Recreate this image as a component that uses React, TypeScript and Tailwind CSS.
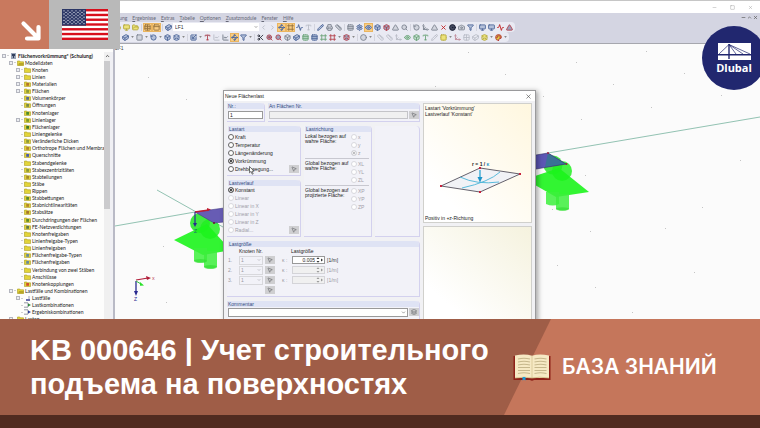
import clsx from "clsx";
import type { ReactNode } from "react";
import {
  Activity,
  Box,
  Camera,
  ChartLine,
  ChevronDown,
  ChevronLeft,
  ChevronRight,
  ChevronUp,
  Circle,
  CircleDot,
  Cuboid,
  Eye,
  Filter,
  FolderOpen,
  Frame,
  Grid2x2,
  Layers,
  Minus,
  MonitorUp,
  Move3d,
  MousePointer2,
  Palette,
  PanelTop,
  Pencil,
  Printer,
  RotateCcw,
  Ruler,
  Scaling,
  Scissors,
  Search,
  Settings,
  Square,
  Table,
  Triangle,
  Type,
  Waypoints,
  X,
  ZoomIn,
  type LucideIcon,
} from "lucide-react";

type Tool = {
  icon?: LucideIcon;
  color?: string;
  active?: boolean;
  kind?: "caret" | "sep" | "select";
};

const NAVY = "text-[#4d6698] fill-[#b4c0da]";
const SLATE = "text-[#7c828f] fill-[#d2d5de]";
const FADED = "text-[#b8bbc6]";
const RED = "text-[#b3404c] fill-[#9aa2bc]";
const GREEN = "text-[#6aa278] fill-[#c4dcd0]";
const YELLOW = "text-[#b4a838] fill-[#ece27a]";
const BROWN = "text-[#94703c]";

const t = (icon: LucideIcon, color: string, active = false): Tool => ({
  icon,
  color,
  active,
});
const caret: Tool = { kind: "caret" };
const sep: Tool = { kind: "sep" };

const toolbarTop: Tool[] = [
  t(FolderOpen, YELLOW),
  t(MonitorUp, YELLOW),
  t(FolderOpen, YELLOW),
  sep,
  t(Table, BROWN, true),
  t(PanelTop, BROWN, true),
  sep,
  t(Cuboid, NAVY),
  { kind: "select" },
  t(ChevronLeft, FADED),
  t(ChevronRight, FADED),
  t(Waypoints, NAVY, true),
  t(Frame, BROWN, true),
  t(Activity, NAVY),
  t(Type, FADED),
  sep,
  t(Pencil, NAVY),
  t(Printer, SLATE),
  t(Ruler, SLATE),
  sep,
  t(Table, SLATE),
  t(Settings, NAVY),
  t(Eye, NAVY, true),
  t(Box, NAVY),
  t(Box, RED),
  t(Triangle, SLATE),
  t(Search, SLATE),
  sep,
  t(RotateCcw, SLATE),
  t(Move3d, SLATE),
  t(Triangle, SLATE),
  t(X, "text-[#c02020]"),
  t(CircleDot, "text-[#181c30] fill-[#444a60]"),
  t(Camera, SLATE),
  t(Filter, NAVY),
  sep,
  t(MonitorUp, NAVY),
  t(MonitorUp, NAVY),
  t(Activity, "text-[#c02020]"),
  t(Triangle, RED),
];

const toolbarBottom: Tool[] = [
  t(Cuboid, NAVY),
  caret,
  t(Square, SLATE),
  caret,
  t(RotateCcw, NAVY),
  caret,
  t(Box, NAVY),
  t(Layers, NAVY),
  caret,
  sep,
  t(Scaling, NAVY),
  caret,
  t(Type, RED),
  t(ChartLine, FADED),
  t(ChartLine, SLATE),
  t(Waypoints, NAVY, true),
  t(Filter, NAVY),
  caret,
  sep,
  t(Scissors, "text-[#30343f]"),
  t(ZoomIn, RED),
  t(Search, RED),
  t(Box, SLATE),
  t(Cuboid, NAVY),
  t(Table, GREEN),
  t(Table, NAVY),
  t(Frame, GREEN),
  t(Frame, RED),
  caret,
  t(Layers, RED),
  caret,
  sep,
  t(Circle, SLATE),
  caret,
  sep,
  t(Ruler, FADED),
  t(Ruler, FADED),
  t(Move3d, FADED),
  t(Eye, GREEN),
  t(Box, GREEN),
  t(Type, GREEN),
  t(Pencil, FADED),
  t(Grid2x2, YELLOW),
  caret,
  t(Move3d, "text-[#c08a98]"),
  t(Grid2x2, FADED),
  t(Cuboid, FADED),
  t(Layers, YELLOW),
  caret,
  t(Palette, "text-[#b3303c] fill-[#e0d040]"),
  caret,
];

const menus = [
  "Berechnung",
  "Ergebnisse",
  "Extras",
  "Tabelle",
  "Optionen",
  "Zusatzmodule",
  "Fenster",
  "Hilfe",
];

type TreeRow = { label: string; level: number; box?: boolean; tint?: string };

const tree: TreeRow[] = [
  { label: "Flächenvorkrümmung* (Schulung)", level: 0, box: true },
  { label: "Modelldaten", level: 1, box: true },
  { label: "Knoten", level: 2, box: true },
  { label: "Linien", level: 2, box: true },
  { label: "Materialien", level: 2, box: true, tint: "#b5762c" },
  { label: "Flächen", level: 2, box: true, tint: "#8c9a3a" },
  { label: "Volumenkörper", level: 2, tint: "#5a6a90" },
  { label: "Öffnungen", level: 2, tint: "#7c8a4a" },
  { label: "Knotenlager", level: 2, tint: "#4f8a2c" },
  { label: "Linienlager", level: 2, box: true, tint: "#7c9a2c" },
  { label: "Flächenlager", level: 2, tint: "#3f7a2c" },
  { label: "Liniengelenke", level: 2 },
  { label: "Veränderliche Dicken", level: 2, tint: "#8c9a3a" },
  { label: "Orthotrope Flächen und Membran", level: 2, tint: "#b5862c" },
  { label: "Querschnitte", level: 2, tint: "#4a5ab0" },
  { label: "Stabendgelenke", level: 2 },
  { label: "Stabexzentrizitäten", level: 2, tint: "#8c9a3a" },
  { label: "Stabteilungen", level: 2, tint: "#a58a2c" },
  { label: "Stäbe", level: 2 },
  { label: "Rippen", level: 2 },
  { label: "Stabbettungen", level: 2, tint: "#5f8a2c" },
  { label: "Stabnichtlinearitäten", level: 2, tint: "#b5862c" },
  { label: "Stabsätze", level: 2, tint: "#a5762c" },
  { label: "Durchdringungen der Flächen", level: 2, tint: "#5f8a2c" },
  { label: "FE-Netzverdichtungen", level: 2, tint: "#5f7a4c" },
  { label: "Knotenfreigaben", level: 2 },
  { label: "Linienfreigabe-Typen", level: 2 },
  { label: "Linienfreigaben", level: 2 },
  { label: "Flächenfreigabe-Typen", level: 2, tint: "#6a8a9a" },
  { label: "Flächenfreigaben", level: 2, tint: "#6a8a9a" },
  { label: "Verbindung von zwei Stäben", level: 2 },
  { label: "Anschlüsse", level: 2 },
  { label: "Knotenkopplungen", level: 2, tint: "#d0502c" },
  { label: "Lastfälle und Kombinationen", level: 1, box: true },
  { label: "Lastfälle", level: 2, box: true, tint: "load" },
  { label: "Lastkombinationen", level: 2, tint: "combo" },
  { label: "Ergebniskombinationen", level: 2, tint: "combo" },
  { label: "Lasten", level: 1, box: true },
];

const indents = ["pl-[2px]", "pl-[9px]", "pl-[16px]"];

function TreeIcon({ row }: { row: TreeRow }) {
  if (row.level === 0) {
    return (
      <svg viewBox="0 0 7 6" className="h-[6px] w-[7px] shrink-0">
        <rect x="1" y="0" width="5" height="6" fill="#9aa4b8" />
        <path d="M2 1h3v2H2zM3 3h1v2H3z" fill="#33415e" />
      </svg>
    );
  }
  if (row.tint === "load") {
    return (
      <svg viewBox="0 0 7 6" className="h-[6px] w-[7px] shrink-0">
        <path d="M2 5h4" stroke="#2a2f90" strokeWidth="1.4" />
        <path d="M5 1v3" stroke="#9aa4b8" />
      </svg>
    );
  }
  if (row.tint === "combo") {
    return (
      <svg viewBox="0 0 7 6" className="h-[6px] w-[7px] shrink-0">
        <path d="M0 .8h4M0 5.2h4M4 1v4" stroke="#7a8090" strokeWidth=".8" />
        <path
          d="M4 1.5 7 3 4 4.6z"
          fill={row.label.startsWith("Last") ? "#2d8a3a" : "#2a3a9a"}
        />
      </svg>
    );
  }
  return (
    <svg viewBox="0 0 7 6" className="h-[6px] w-[7px] shrink-0">
      <path d="M.5 1h2.3l.7.8h3v3.8h-6z" fill="#e2d43a" stroke="#a89a20" strokeWidth=".6" />
      {row.level === 1 && <path d="M2 3h4.6v2.6H1z" fill="#b8a628" />}
      {row.tint && <rect x="2.2" y="2" width="2.8" height="2.8" fill={row.tint} />}
    </svg>
  );
}

function Navigator() {
  return (
    <aside className="flex w-[115px] shrink-0 border-r-2 border-[#b9bac6] bg-[#fdfdfc] pt-[8px]">
      <ul className="-mb-1 grid min-w-0 flex-1 auto-rows-fr overflow-hidden font-['Lato',sans-serif] text-[5px] leading-[6px] text-[#222]">
        {tree.map((row) => (
          <li
            key={row.label}
            className={clsx("flex items-center gap-px whitespace-nowrap", indents[row.level])}
          >
            <span
              className={clsx(
                "h-[4px] w-[4px] shrink-0",
                row.box && "border border-[#b4b6bf] bg-[#eceef2]",
              )}
            />
            <span className="h-px w-[2px] shrink-0 bg-[#cfcfd2]" />
            <TreeIcon row={row} />
            <span className={clsx(row.level === 0 && "font-bold")}>{row.label}</span>
          </li>
        ))}
      </ul>
      <div className="flex w-[6px] shrink-0 flex-col items-center bg-[#f0f0f0]">
        <ChevronUp className="h-[8px] w-[5px] text-[#444]" strokeWidth={4} />
        <div className="mt-px h-[148px] w-[6px] bg-[#cbcbcd]" />
      </div>
      <div className="w-[3px] bg-[#f0f0f4]" />
    </aside>
  );
}

function Toolbar({ tools, label }: { tools: Tool[]; label: string }) {
  return (
    <div role="toolbar" aria-label={label} className="flex h-[10px] items-center">
      {tools.map((tool, i) => {
        if (tool.kind === "sep") {
          return <span key={i} className="mx-px h-[7px] w-px shrink-0 bg-[#d3d4de]" />;
        }
        if (tool.kind === "caret") {
          return (
            <button key={i} aria-label="Mehr" className="flex w-[5px] shrink-0 justify-center">
              <svg viewBox="0 0 4 3" className="h-[2px] w-[3px]">
                <path d="M0 0h4L2 3z" fill="#888" />
              </svg>
            </button>
          );
        }
        if (tool.kind === "select") {
          return (
            <span key={i} className="relative flex h-[8px] w-[86px] shrink-0 items-center bg-white">
              <select
                aria-label="Lastfall"
                className="h-full w-full appearance-none bg-transparent pl-[2px] text-[5px] leading-[8px] text-[#333]"
              >
                <option>LF1</option>
              </select>
              <ChevronDown
                className="pointer-events-none absolute right-px h-[4px] w-[4px] text-[#777]"
                strokeWidth={4}
              />
            </span>
          );
        }
        const Icon = tool.icon!;
        return (
          <button
            key={i}
            aria-label={`Werkzeug ${i + 1}`}
            className={clsx(
              "flex h-[9px] w-[9px] shrink-0 items-center justify-center",
              tool.active && "bg-[#f9cd83] outline outline-[#eab560] -outline-offset-1",
            )}
          >
            <Icon className={clsx("h-[7px] w-[7px]", tool.color)} strokeWidth={3} />
          </button>
        );
      })}
    </div>
  );
}

function Header() {
  return (
    <header className="shrink-0 border-b border-[#a6a7ae] bg-[#d4d5e2]">
      <div className="flex h-[13px] items-center justify-end gap-[13px] border-t border-[#c6c6c6] bg-white pr-[7px] text-[#999]">
        <Minus className="h-[5px] w-[5px]" />
        <Square className="h-[5px] w-[5px]" />
        <X className="h-[5px] w-[5px]" />
      </div>
      <div className="flex h-[9px] items-center justify-between pl-[101px] pr-[2px] text-[5px] leading-[8px] text-[#666877]">
        <nav className="flex gap-[5px] font-['Lato',sans-serif]">
          {menus.map((menu) => (
            <button key={menu} className="first-letter:underline">
              {menu}
            </button>
          ))}
        </nav>
        <div className="flex gap-px text-[#555]">
          <Minus className="h-[5px] w-[5px]" strokeWidth={3} />
          <ChevronUp className="h-[5px] w-[5px]" strokeWidth={3} />
          <X className="h-[5px] w-[5px]" strokeWidth={3} />
        </div>
      </div>
      <div className="flex h-[21px] flex-col items-start">
        <div className="rounded-r bg-[#e9eaf3] pl-[113px] pr-px">
          <Toolbar tools={toolbarTop} label="Standard" />
        </div>
        <div className="rounded-r bg-[#e9eaf3] pl-[121px] pr-px">
          <Toolbar tools={toolbarBottom} label="Ansicht" />
        </div>
      </div>
    </header>
  );
}

const gridDots = [
  [148, 77], [186, 99], [468, 52], [576, 62], [505, 74], [613, 84], [684, 73],
  [543, 96], [581, 119], [721, 95], [646, 51], [435, 86], [651, 107], [585, 175],
  [590, 231], [557, 265], [595, 287], [632, 312], [702, 207], [694, 272],
  [163, 246], [166, 302], [289, 54], [740, 160], [665, 228], [552, 209],
];

function Viewport() {
  return (
    <section className="relative min-w-0 flex-1 bg-[#fbfbfb]">
      <svg
        viewBox="115 44 645 275"
        preserveAspectRatio="xMinYMin slice"
        className="absolute inset-0 h-full w-full"
        fontFamily="Liberation Sans, sans-serif"
      >
        {gridDots.map(([x, y]) => (
          <rect key={`${x}-${y}`} x={x} y={y} width="1" height="1" fill="#c4c4c4" />
        ))}
        <text x="115" y="50" fontSize="5" fill="#444">
          LF1
        </text>
        <path d="M115 226 195 212M157 190l66 37M548 153l212-36" stroke="#86bba9" strokeWidth=".9" fill="none" />
        <g transform="translate(195 201)">
          <circle cx="5" cy="22" r="10" fill="#1ee81e" fillOpacity=".85" />
          <circle cx="15" cy="28" r="10" fill="#22f022" fillOpacity=".85" />
          <path d="M-21 39 12 23 31 44 31 50 8 54z" fill="#1cf41c" fillOpacity=".9" />
          <path d="M-1 47h13v13q-6.500 3-13 0z" fill="#3cf03c" fillOpacity=".85" />
          <path d="M9 50h13v16q-6.500 3-13 0z" fill="#3cee3c" fillOpacity=".85" />
          <ellipse cx="5.500" cy="60" rx="6.500" ry="2" fill="#2fdc2f" fillOpacity=".6" />
          <ellipse cx="15.500" cy="66" rx="6.500" ry="2" fill="#2fdc2f" fillOpacity=".6" />
        </g>
        <path d="M195 212 224 208v14l-10 1z" fill="#675cb4" stroke="#443a86" strokeWidth=".6" />
        <path d="M195 212l14-2" stroke="#c01c30" strokeWidth="1.400" />
        <path d="M207 208l4 1.500-4 1.800z" fill="#c01c30" />
        <path d="M195 212v13" stroke="#2a2a90" strokeWidth="1.200" />
        <path d="M193 223h4l-2 4z" fill="#2a2a90" />
        <text x="194" y="233" fontSize="5" fill="#1c6a6a">
          Z
        </text>
        <circle cx="214" cy="223" r="1" fill="#701030" />
        <g transform="translate(553 142)">
          <circle cx="0" cy="23" r="9.500" fill="#22e422" fillOpacity=".85" />
          <circle cx="9" cy="29" r="10" fill="#22f022" fillOpacity=".85" />
          <path d="M-18 34 6 26 36 50 3 55-18 43z" fill="#1cf41c" fillOpacity=".9" />
          <path d="M-7 50H6v12q-6 3-13 0z" fill="#3cf03c" fillOpacity=".85" />
          <path d="M3 52h13v15q-6 3-13 0z" fill="#3cee3c" fillOpacity=".85" />
          <ellipse cx="9.500" cy="67" rx="6.500" ry="1.800" fill="#2fdc2f" fillOpacity=".6" />
        </g>
        <path d="M536 155 548 153 566 164 536 169z" fill="#5c56b4" />
        <path d="M548 153 566 164 545 167z" fill="#3a7296" />
        <path d="M536 155 548 153 566 164 536 169" fill="none" stroke="#33306a" strokeWidth=".6" />
        <circle cx="548" cy="153" r="1" fill="#a01c40" />
        <circle cx="566.500" cy="164" r="1" fill="#a01c40" />
        <path d="M136 280l12-2" stroke="#b01c38" strokeWidth="1.200" />
        <path d="M146 276l5 2-4 2z" fill="#b01c38" />
        <path d="M136 281v11" stroke="#2a2a90" strokeWidth="1.300" />
        <path d="M134 291h4l-2 5z" fill="#2a2a90" />
        <path d="M136 281l5 3" stroke="#30c040" />
        <path d="M140 282l4 3.500-4 .2z" fill="#28e028" />
        <text x="152" y="280" fontSize="4" fill="#b01c38">
          X
        </text>
        <text x="134" y="301" fontSize="5" fill="#2a2a90">
          Z
        </text>
      </svg>
    </section>
  );
}

function Panel({
  title,
  className,
  children,
}: {
  title?: string;
  className?: string;
  children?: ReactNode;
}) {
  return (
    <fieldset
      className={clsx(
        "flex min-w-0 flex-col rounded-tr-[4px] border-r border-b border-[#d3d1ee] bg-[#f2f2f8]",
        className,
      )}
    >
      {title && (
        <legend className="float-left h-[6px] w-full rounded-tr-[4px] bg-[#dfe3f4] pl-px leading-[6px] text-[#2f4a80]">
          {title}
        </legend>
      )}
      {children}
    </fieldset>
  );
}

function Option({
  label,
  name,
  checked = false,
  disabled = false,
}: {
  label: string;
  name: string;
  checked?: boolean;
  disabled?: boolean;
}) {
  return (
    <label
      className={clsx(
        "flex h-[8px] items-center gap-px whitespace-nowrap",
        disabled ? "text-[#a0a0a8]" : "text-[#222]",
      )}
    >
      <input
        type="radio"
        name={name}
        defaultChecked={checked}
        disabled={disabled}
        className="h-[6px] w-[6px] shrink-0 appearance-none rounded-full border border-[#666] bg-white shadow-[inset_0_0_0_1px_white] checked:bg-[#111] disabled:border-[#d8d8de] disabled:checked:bg-[#a8a8ac]"
      />
      {label}
    </label>
  );
}

function PickButton({ label, children }: { label: string; children?: ReactNode }) {
  return (
    <button
      aria-label={label}
      className="flex h-[8px] w-[10px] shrink-0 items-center justify-center bg-[#cfcfd1] text-[#77787c]"
    >
      {children ?? <MousePointer2 className="h-[6px] w-[6px]" strokeWidth={3} />}
    </button>
  );
}

function LoadRow({ n, value }: { n: number; value?: string }) {
  return (
    <div className="flex h-[10px] items-center text-[#9a9aa2]">
      <span className="w-[11px]">{n}.</span>
      <span className="relative flex h-[9px] w-[24px] items-center border border-[#d8d8dc]">
        <select
          aria-label={`Knoten ${n}`}
          disabled
          className="h-full w-full appearance-none pl-px leading-[7px]"
        >
          <option>1</option>
        </select>
        <ChevronDown className="pointer-events-none absolute right-px h-[4px] w-[4px]" strokeWidth={3} />
      </span>
      <span className="w-[2px]" />
      <PickButton label={`Knoten ${n} wählen`} />
      <label htmlFor={`last-${n}`} className="w-[17px] pl-[7px]">
        κ :
      </label>
      <span
        className={clsx(
          "flex h-[8px] w-[33px] items-center border",
          value ? "border-[#999] bg-white" : "border-[#d4d4d8] bg-[#f0f0f0]",
        )}
      >
        <input
          id={`last-${n}`}
          defaultValue={value}
          disabled={!value}
          className="mr-px w-[22px] min-w-0 text-right text-[#222]"
        />
        <svg viewBox="0 0 4 6" className="h-[6px] w-[4px] shrink-0">
          <path d="M.5 2 2 .2 3.500 2zM.5 4 2 5.800 3.500 4z" fill={value ? "#333" : "#999"} />
        </svg>
        <svg viewBox="0 0 4 6" className="h-[6px] w-[4px] shrink-0">
          <path d="M1 1.500 3 3 1 4.500z" fill={value ? "#333" : "#999"} />
        </svg>
      </span>
      <span className={clsx("pl-[2px]", value && "text-[#333]")}>[1/m]</span>
    </div>
  );
}

function LoadSketch() {
  return (
    <svg
      viewBox="0 0 84 32"
      className="h-[32px] w-[84px] overflow-visible"
      fontFamily="Liberation Sans, sans-serif"
    >
      <path d="M2 23 41 5 81 11 41 29z" fill="#f1f2f6" stroke="#54505c" strokeWidth=".9" />
      <path d="M21 14Q38 22 60 19M61 9Q50 19 23 25" stroke="#48b4d8" fill="none" strokeWidth=".9" />
      <path d="M41 7v8" stroke="#2da4d2" strokeWidth="1.300" />
      <path d="M38.500 14h5L41 19.500z" fill="#1c94c8" />
      <path d="M1 22h2v2H1zM40 4h2v2h-2zM80 10h2v2h-2zM40 28h2v2h-2z" fill="#c8203c" />
      <text x="33" y="3" fontSize="5" fontWeight="bold" fill="#222">
        r = 1 / <tspan fill="#1c94c8">κ</tspan>
      </text>
    </svg>
  );
}

function LoadDialog() {
  return (
    <div
      role="dialog"
      aria-label="Neue Flächenlast"
      className="absolute top-[90px] -bottom-1 left-[223px] flex w-[313px] flex-col border border-[#9a9a9c] bg-[#f1f1f4] text-[5px] leading-[6px] text-[#222] shadow-[2px_1px_5px_rgba(0,0,0,0.35)]"
    >
      <div className="flex h-[10px] shrink-0 items-center justify-between bg-white pl-px pr-[3px]">
        <span>Neue Flächenlast</span>
        <button aria-label="Schließen">
          <X className="h-[7px] w-[7px] text-[#444]" />
        </button>
      </div>
      <div className="flex min-h-0 flex-1 gap-[3px] px-[3px] pt-[2px]">
        <div className="flex w-[193px] flex-col gap-[4px]">
          <div className="flex gap-[3px]">
            <Panel title="Nr.:" className="w-[38px]">
              <input
                aria-label="Nr."
                defaultValue="1"
                className="mx-px my-[2px] h-[8px] border border-[#999] bg-white pl-px"
              />
            </Panel>
            <Panel title="An Flächen Nr." className="flex-1">
              <div className="my-[2px] flex gap-px pl-px">
                <input
                  aria-label="An Flächen Nr."
                  disabled
                  className="h-[8px] min-w-0 flex-1 border border-[#c4c4c8] bg-[#f0f0f0]"
                />
                <PickButton label="Flächen wählen" />
              </div>
            </Panel>
          </div>
          <div className="flex h-[111px] gap-[3px]">
            <div className="flex w-[74px] flex-col gap-[4px]">
              <Panel title="Lastart" className="h-[50px] pl-px">
                <div className="flex items-end justify-between pt-px pr-px">
                  <div>
                    <Option name="art" label="Kraft" />
                    <Option name="art" label="Temperatur" />
                    <Option name="art" label="Längenänderung" />
                    <Option name="art" label="Vorkrümmung" checked />
                    <Option name="art" label="Drehbewegung..." />
                  </div>
                  <PickButton label="Drehbewegung bearbeiten" />
                </div>
              </Panel>
              <Panel title="Lastverlauf" className="flex-1 pl-px">
                <div className="flex items-end justify-between pr-px">
                  <div>
                    <Option name="verlauf" label="Konstant" checked />
                    <Option name="verlauf" label="Linear" disabled />
                    <Option name="verlauf" label="Linear in X" disabled />
                    <Option name="verlauf" label="Linear in Y" disabled />
                    <Option name="verlauf" label="Linear in Z" disabled />
                    <Option name="verlauf" label="Radial..." disabled />
                  </div>
                  <PickButton label="Radial bearbeiten" />
                </div>
              </Panel>
            </div>
            <Panel title="Lastrichtung" className="w-[68px] pl-px">
              {[
                ["Lokal bezogen auf", "wahre Fläche:", "x", "y", "z"],
                ["Global bezogen auf", "wahre Fläche:", "XL", "YL", "ZL"],
                ["Global bezogen auf", "projizierte Fläche:", "XP", "YP", "ZP"],
              ].map(([first, second, ...axes]) => (
                <div
                  key={second + axes[0]}
                  className="mr-[2px] flex justify-between border-b border-[#c8c8d0] py-px last:border-b-0"
                >
                  <p className="pt-px whitespace-nowrap leading-[5px]">
                    {first}
                    <br />
                    {second}
                  </p>
                  <div className="w-[18px] shrink-0">
                    {axes.map((axis) => (
                      <Option key={axis} name="richtung" label={axis} checked={axis === "z"} disabled />
                    ))}
                  </div>
                </div>
              ))}
            </Panel>
            <Panel className="flex-1" />
          </div>
          <Panel title="Lastgröße" className="h-[56px] pl-px">
            <div className="flex h-[8px] items-center">
              <span className="w-[63px] pl-[11px]">Knoten Nr.</span>
              <span>Lastgröße</span>
            </div>
            <LoadRow n={1} value="0.005" />
            <LoadRow n={2} />
            <LoadRow n={3} />
            <div className="pt-px pl-[37px]">
              <PickButton label="Alle Knoten wählen" />
            </div>
          </Panel>
          <Panel title="Kommentar" className="flex-1">
            <div className="flex gap-px pt-px pl-px">
              <span className="relative flex h-[9px] flex-1 items-center border border-[#999] bg-white">
                <select aria-label="Kommentar" className="h-full w-full appearance-none" />
                <ChevronDown className="pointer-events-none absolute right-px h-[5px] w-[5px]" />
              </span>
              <PickButton label="Kommentar wählen">
                <Layers className="h-[6px] w-[6px]" strokeWidth={3} />
              </PickButton>
            </div>
          </Panel>
        </div>
        <div className="flex min-w-0 flex-1 flex-col gap-[3px]">
          <div className="flex h-[120px] flex-col border border-[#d0d0cc] bg-linear-to-bl from-[#fff7df] to-white to-80% p-px">
            <p>Lastart 'Vorkrümmung'</p>
            <p>Lastverlauf 'Konstant'</p>
            <div className="flex flex-1 items-center pt-[26px] pl-[14px]">
              <LoadSketch />
            </div>
            <p>Positiv in +z-Richtung</p>
          </div>
          <div className="flex-1 border border-[#d0d0cc] bg-linear-to-bl from-[#f5f2de] to-white to-80%" />
        </div>
      </div>
      <svg viewBox="0 0 6 9" className="absolute top-[75px] left-[25px] h-[9px] w-[6px]">
        <path d="M.5.5v6.300L2 5.400 3.200 8.200l1-.4L3 5.200h2z" fill="#fff" stroke="#222" strokeWidth=".6" />
      </svg>
    </div>
  );
}

function Flag() {
  const stars = Array.from({ length: 9 }, (_, row) =>
    Array.from({ length: row % 2 ? 5 : 6 }, (_, col) => [
      (row % 2 ? 4 : 2) + col * 4,
      1.8 + row * 1.6,
    ]),
  ).flat();
  return (
    <svg viewBox="0 0 46 31" className="h-[31px] w-[46px]" role="img" aria-label="USA">
      <rect width="46" height="31" fill="#fff" />
      {Array.from({ length: 7 }, (_, i) => (
        <rect key={i} y={(i * 62) / 13} width="46" height={31 / 13} fill="#d80f1c" />
      ))}
      <rect width="24" height="16.700" fill="#2c3766" />
      {stars.map(([x, y]) => (
        <circle key={`${x}-${y}`} cx={x} cy={y} r=".65" fill="#e4e6f0" />
      ))}
    </svg>
  );
}

function Logo() {
  return (
    <div className="absolute top-[26px] -right-[6px] flex h-[64px] w-[64px] flex-col items-center justify-center rounded-full bg-[#21276f] pt-[2px] text-white">
      <svg viewBox="0 0 33 17" className="h-[17px] w-[33px]">
        <path d="M0 0h33v11H0zM0 12.500h33V17H0z" fill="#fff" />
        <path
          d="M1 11 11 1.500 32 11M11 1.500 25 11M11 1.500 18 11"
          stroke="#21276f"
          strokeWidth=".7"
          fill="none"
        />
        <path d="M11 1v15" stroke="#21276f" strokeWidth="1.400" />
      </svg>
      <span className="font-['Open_Sans',sans-serif] text-[11px] leading-[16px] font-bold">
        Dlubal
      </span>
    </div>
  );
}

function Book() {
  return (
    <svg viewBox="0 0 38 27" className="h-[27px] w-[38px] shrink-0">
      <path d="M.5 2h37v24H21q-2 1.500-4 0H.5z" fill="#8e2018" />
      <path d="M2 1.500Q12-.5 19 1.800 26-.5 36 1.500V24H2z" fill="#f6e9c4" />
      <path d="M19 2v22" stroke="#dccb9c" strokeWidth="1" />
      <path d="M2 24q10-1.600 17 0 7-1.600 17 0" stroke="#cbb27c" strokeWidth=".8" fill="none" />
      <path
        d="M5 5q6-1.500 12 0M5 8q6-1.500 12 0M5 11q6-1.500 12 0M5 13.500h12M5 16.500h12M5 19.500q6-1.500 12 0M21.500 5q6-1.500 12 0M21.500 8q6-1.500 12 0M21.500 11q6-1.500 12 0M21.500 13.500h12M21.500 16.500h12M21.500 19.500q6-1.500 12 0"
        stroke="#c6b78c"
        strokeWidth="1.200"
        fill="none"
      />
      <path d="M9.500 23h3v3.500L11 25.700l-1.500.8z" fill="#1f9ad6" />
    </svg>
  );
}

function Banner() {
  return (
    <footer className="relative shrink-0 border-b-[13px] border-[#512b20] bg-[#9f5d47] font-['Liberation_Sans',Arial,sans-serif] text-white">
      <div className="flex h-[96px] items-stretch justify-between">
        <h1 className="flex-1 self-center pl-[30px] text-[29px] leading-[34px] font-bold whitespace-nowrap">
          KB 000646 | Учет строительного
          <br />
          подъема на поверхностях
        </h1>
        <div className="relative flex w-[256px] items-center gap-[11px] pl-[9px]">
          <div className="absolute inset-0 bg-[#c5765b] [clip-path:polygon(47px_0,100%_0,100%_100%,0_100%)]" />
          <div className="relative">
            <Book />
          </div>
          <span className="relative font-['Inter',sans-serif] text-[21px] leading-[28px] font-semibold whitespace-nowrap">
            БАЗА ЗНАНИЙ
          </span>
        </div>
      </div>
    </footer>
  );
}

export default function App() {
  return (
    <main className="relative flex h-screen flex-col overflow-hidden bg-white font-['Liberation_Sans',Arial,sans-serif]">
      <div className="relative flex min-h-0 flex-1 flex-col overflow-hidden">
        <Header />
        <div className="flex min-h-0 flex-1">
          <Navigator />
          <Viewport />
        </div>
        <LoadDialog />
      </div>
      <Banner />
      <div className="absolute top-0 left-0 flex h-[49px]">
        <div className="w-[49px] bg-[#c9795e]">
          <svg viewBox="0 0 49 49" className="h-[49px] w-[49px]">
            <path
              d="M23.500 23.500 38 38M38.500 27v11.500H27"
              stroke="#fff"
              strokeWidth="4.200"
              strokeLinecap="round"
              strokeLinejoin="round"
              fill="none"
            />
          </svg>
        </div>
        <div className="flex w-[71px] items-center justify-center bg-[#b9b9b9]">
          <Flag />
        </div>
      </div>
      <Logo />
    </main>
  );
}
